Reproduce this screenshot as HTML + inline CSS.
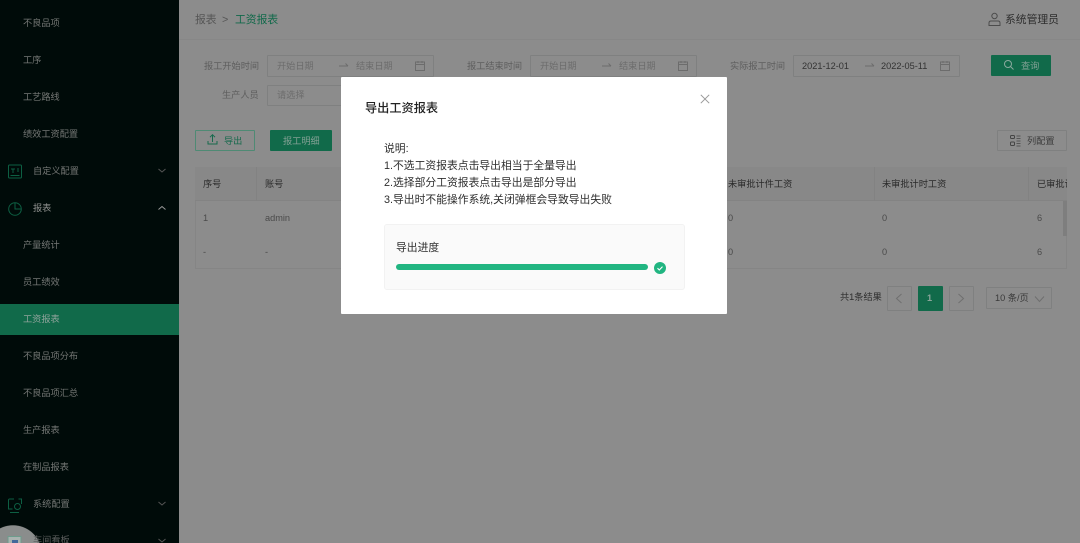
<!DOCTYPE html>
<html lang="zh"><head><meta charset="utf-8"><style>
html,body{margin:0;padding:0;width:1080px;height:543px;overflow:hidden;background:#8c8c8c}
body{font-family:"Liberation Sans","Noto Sans CJK SC",sans-serif}
#root{position:absolute;left:0;top:0;width:1080px;height:543px;overflow:hidden;background:#8c8c8c;filter:blur(.35px)}
.a,.t{position:absolute}
.t{white-space:nowrap;line-height:14px}
.s{font-size:9.2px;color:#747775;left:23px}
.p{font-size:9.2px;color:#5e5e5e;text-align:right}
.b{border:1px solid #7f8080;box-sizing:border-box;border-radius:1px}
.ph{font-size:9.2px;color:#6c6c6c}
.h{font-size:9.2px;color:#2a2a2a}
.d{font-size:9.2px;color:#4a4a4a}
.m{font-size:10.8px;color:#2e2e2e;left:384px}
svg{position:absolute;fill:none}
</style></head><body><div id="root">
<div class="a" style="left:0;top:0;width:179px;height:543px;background:#000b09"></div>
<div class="a" style="left:0;top:304px;width:179px;height:31px;background:#116a4a"></div>
<div class="t s" style="top:16px">不良品项</div>
<div class="t s" style="top:53px">工序</div>
<div class="t s" style="top:90px">工艺路线</div>
<div class="t s" style="top:127px">绩效工资配置</div>
<div class="t s" style="left:33px;top:164px">自定义配置</div>
<div class="t s" style="left:33px;top:201px;color:#8f918f">报表</div>
<div class="t s" style="top:238px">产量统计</div>
<div class="t s" style="top:275px">员工绩效</div>
<div class="t s" style="top:312px;color:#8fa39b">工资报表</div>
<div class="t s" style="top:349px">不良品项分布</div>
<div class="t s" style="top:386px">不良品项汇总</div>
<div class="t s" style="top:423px">生产报表</div>
<div class="t s" style="top:460px">在制品报表</div>
<div class="t s" style="left:33px;top:497px">系统配置</div>
<svg style="left:7px;top:164px" width="16" height="16" stroke="#0d5f43"><rect x="1.500" y="1" width="13" height="13" rx="1"/><path d="M4 5h4M6 5v4M10 5h2M10 7h2M3.500 11.500h9"/></svg>
<svg style="left:7px;top:201px" width="16" height="16" stroke="#0d5f43"><circle cx="8" cy="8" r="6.300"/><path d="M8 1.700V8h6.300"/></svg>
<svg style="left:7px;top:497px" width="16" height="16" stroke="#0d5f43"><path d="M7 2H2.500a1 1 0 0 0-1 1v9h4M14.500 7V2h-3M3 15.500h9"/><circle cx="10.500" cy="9.500" r="3"/></svg>
<svg style="left:157px;top:167px" width="10" height="8" stroke="#555"><path d="M1.500 2l3.500 3 3.500-3"/></svg>
<svg style="left:157px;top:204px" width="10" height="8" stroke="#999"><path d="M1.500 5.500l3.500-3 3.500 3"/></svg>
<svg style="left:157px;top:500px" width="10" height="8" stroke="#555"><path d="M1.500 2l3.500 3 3.500-3"/></svg>
<svg style="left:157px;top:537px" width="10" height="6" stroke="#555"><path d="M1.500 2l3.500 3 3.500-3"/></svg>
<div class="a" style="left:0;top:525px;width:44px;height:18px;background:radial-gradient(circle 29px at 13px 29px,#8a8d8c 98%,rgba(138,141,140,0) 100%)"></div>
<svg style="left:7px;top:536px" width="16" height="7"><rect x="1" y=".5" width="13" height="9" fill="#a9b3b0" stroke="#6d9c8c"/><rect x="5" y="4" width="6" height="4" fill="#44689a"/></svg>
<div class="t" style="left:33px;top:533px;height:10px;overflow:hidden;font-size:9.200px;color:#5a5d5c">车间看板</div>

<div class="a" style="left:179px;top:0;width:901px;height:40px;box-sizing:border-box;border-bottom:1px solid #878787;background:#8c8c8c"></div>
<div class="t" style="left:195px;top:13px;font-size:10.800px;color:#555">报表</div>
<div class="t" style="left:222px;top:13px;font-size:10.800px;color:#555">&gt;</div>
<div class="t" style="left:235px;top:13px;font-size:10.800px;color:#11694a">工资报表</div>
<svg style="left:987px;top:12px" width="15" height="15" stroke="#4c4c4c"><circle cx="7.500" cy="4" r="2.700"/><path d="M2 13.500v-2.500q0-2 2-2h7q2 0 2 2v2.500z"/></svg>
<div class="t" style="left:1005px;top:13px;font-size:10.800px;color:#2e2e2e">系统管理员</div>

<div class="t p" style="left:204px;top:59px">报工开始时间</div>
<div class="a b" style="left:267px;top:55px;width:167px;height:22px"></div>
<div class="t ph" style="left:277px;top:59px">开始日期</div>
<svg style="left:339px;top:62px" width="10" height="7" stroke="#6c6c6c"><path d="M0 4h9M6.500 1.500L9 4"/></svg>
<div class="t ph" style="left:356px;top:59px">结束日期</div>
<svg style="left:414px;top:60px" width="12" height="12" stroke="#6c6c6c"><rect x="1.500" y="2" width="9" height="8.500"/><path d="M1.500 4.500h9M4 1v2M8 1v2"/></svg>
<div class="t p" style="left:467px;top:59px">报工结束时间</div>
<div class="a b" style="left:530px;top:55px;width:167px;height:22px"></div>
<div class="t ph" style="left:540px;top:59px">开始日期</div>
<svg style="left:602px;top:62px" width="10" height="7" stroke="#6c6c6c"><path d="M0 4h9M6.500 1.500L9 4"/></svg>
<div class="t ph" style="left:619px;top:59px">结束日期</div>
<svg style="left:677px;top:60px" width="12" height="12" stroke="#6c6c6c"><rect x="1.500" y="2" width="9" height="8.500"/><path d="M1.500 4.500h9M4 1v2M8 1v2"/></svg>
<div class="t p" style="left:730px;top:59px">实际报工时间</div>
<div class="a b" style="left:793px;top:55px;width:167px;height:22px"></div>
<div class="t" style="left:802px;top:59px;font-size:9.200px;color:#333">2021-12-01</div>
<svg style="left:865px;top:62px" width="10" height="7" stroke="#6c6c6c"><path d="M0 4h9M6.500 1.500L9 4"/></svg>
<div class="t" style="left:881px;top:59px;font-size:9.200px;color:#333">2022-05-11</div>
<svg style="left:939px;top:60px" width="12" height="12" stroke="#6c6c6c"><rect x="1.500" y="2" width="9" height="8.500"/><path d="M1.500 4.500h9M4 1v2M8 1v2"/></svg>
<div class="a" style="left:991px;top:55px;width:60px;height:21px;background:#116a4a;border-radius:1px"></div>
<svg style="left:1003px;top:59px" width="12" height="12" stroke="#8ba99e"><circle cx="5" cy="5" r="3.500"/><path d="M7.500 7.500l3 3"/></svg>
<div class="t" style="left:1021px;top:59px;font-size:9.200px;color:#82a094">查询</div>
<div class="t p" style="left:222px;top:88px">生产人员</div>
<div class="a b" style="left:267px;top:85px;width:100px;height:21px"></div>
<div class="t ph" style="left:277px;top:88px">请选择</div>

<div class="a" style="left:195px;top:130px;width:60px;height:21px;box-sizing:border-box;border:1px solid #4f8a74;border-radius:1px"></div>
<svg style="left:206px;top:133px" width="13" height="13" stroke="#176a4d"><path d="M6.500 9V2M4 4.200l2.500-2.500L9 4.200M2 8v3h9V8"/></svg>
<div class="t" style="left:224px;top:134px;font-size:9.200px;color:#176a4d">导出</div>
<div class="a" style="left:270px;top:130px;width:62px;height:21px;background:#116a4a;border-radius:1px"></div>
<div class="t" style="left:283px;top:134px;font-size:9.200px;color:#82a094">报工明细</div>
<div class="a b" style="left:997px;top:130px;width:70px;height:21px"></div>
<svg style="left:1009px;top:134px" width="13" height="13" stroke="#444"><rect x="1.500" y="1.500" width="4" height="3" rx="1"/><rect x="1.500" y="8" width="4" height="3.500" rx="1"/><path d="M7.500 2h4M7.500 4.500h4M7.500 7h4M7.500 9.500h4M7.500 12h4" stroke-width=".8"/></svg>
<div class="t" style="left:1027px;top:134px;font-size:9.200px;color:#3a3a3a">列配置</div>

<div class="a" style="left:195px;top:167px;width:872px;height:102px;box-sizing:border-box;border:1px solid #858585;border-top:0"></div>
<div class="a" style="left:195px;top:167px;width:872px;height:34px;background:#888;border-bottom:1px solid #838383;box-sizing:border-box"></div>
<div class="a" style="left:256px;top:167px;width:1px;height:34px;background:#828282"></div>
<div class="a" style="left:874px;top:167px;width:1px;height:34px;background:#828282"></div>
<div class="a" style="left:1028px;top:167px;width:1px;height:34px;background:#828282"></div>
<div class="a" style="left:1063px;top:201px;width:4px;height:35px;background:#7e7e7e"></div>
<div class="t h" style="left:203px;top:177px">序号</div><div class="t h" style="left:265px;top:177px">账号</div>
<div class="t h" style="left:728px;top:177px">未审批计件工资</div><div class="t h" style="left:882px;top:177px">未审批计时工资</div><div class="t h" style="left:1037px;top:177px;width:30px;overflow:hidden">已审批计件</div>
<div class="t d" style="left:203px;top:211px">1</div><div class="t d" style="left:265px;top:211px">admin</div>
<div class="t d" style="left:203px;top:245px">-</div><div class="t d" style="left:265px;top:245px">-</div>
<div class="t d" style="left:728px;top:211px">0</div><div class="t d" style="left:882px;top:211px">0</div><div class="t d" style="left:1037px;top:211px">6</div>
<div class="t d" style="left:728px;top:245px">0</div><div class="t d" style="left:882px;top:245px">0</div><div class="t d" style="left:1037px;top:245px">6</div>

<div class="t" style="left:840px;top:290px;font-size:9.200px;color:#2e2e2e">共1条结果</div>
<div class="a b" style="left:887px;top:286px;width:25px;height:25px"></div>
<svg style="left:893px;top:292px" width="12" height="13" stroke="#6f6f6f"><path d="M8.500 2L3.500 6.500 8.500 11"/></svg>
<div class="a" style="left:918px;top:286px;width:25px;height:25px;background:#116a4a;border-radius:1px"></div>
<div class="t" style="left:927px;top:291px;font-size:9.200px;font-weight:bold;color:#8aa59a">1</div>
<div class="a b" style="left:949px;top:286px;width:25px;height:25px"></div>
<svg style="left:955px;top:292px" width="12" height="13" stroke="#6f6f6f"><path d="M3.500 2L8.500 6.500 3.500 11"/></svg>
<div class="a b" style="left:986px;top:287px;width:66px;height:22px"></div>
<div class="t" style="left:995px;top:291px;font-size:9.200px;color:#3a3a3a">10 条/页</div>
<svg style="left:1034px;top:295px" width="11" height="8" stroke="#6f6f6f"><path d="M1 1.500l4.500 5 4.500-5"/></svg>

<div class="a" style="left:341px;top:77px;width:386px;height:237px;background:#fff;border-radius:1px"></div>
<div class="t" style="left:365px;top:101px;font-size:12.200px;font-weight:500;color:#222">导出工资报表</div>
<svg style="left:699px;top:93px" width="12" height="12" stroke="#999"><path d="M1.800 1.800l8.400 8.400M10.200 1.800l-8.400 8.400"/></svg>
<div class="t m" style="top:142px">说明:</div>
<div class="t m" style="top:159px">1.不选工资报表点击导出相当于全量导出</div>
<div class="t m" style="top:176px">2.选择部分工资报表点击导出是部分导出</div>
<div class="t m" style="top:193px">3.导出时不能操作系统,关闭弹框会导致导出失败</div>
<div class="a" style="left:384px;top:224px;width:301px;height:66px;box-sizing:border-box;background:#fafafa;border:1px solid #f2f2f2;border-radius:3px"></div>
<div class="t" style="left:396px;top:241px;font-size:10.800px;color:#2e2e2e">导出进度</div>
<div class="a" style="left:396px;top:264px;width:252px;height:6px;background:#21b581;border-radius:3px"></div>
<svg style="left:654px;top:262px" width="12" height="12"><circle cx="6" cy="6" r="6" fill="#21b581"/><path d="M3.500 6.200l1.800 1.800 3.200-3.400" stroke="#fff" stroke-width="1.100"/></svg>
</div></body></html>
